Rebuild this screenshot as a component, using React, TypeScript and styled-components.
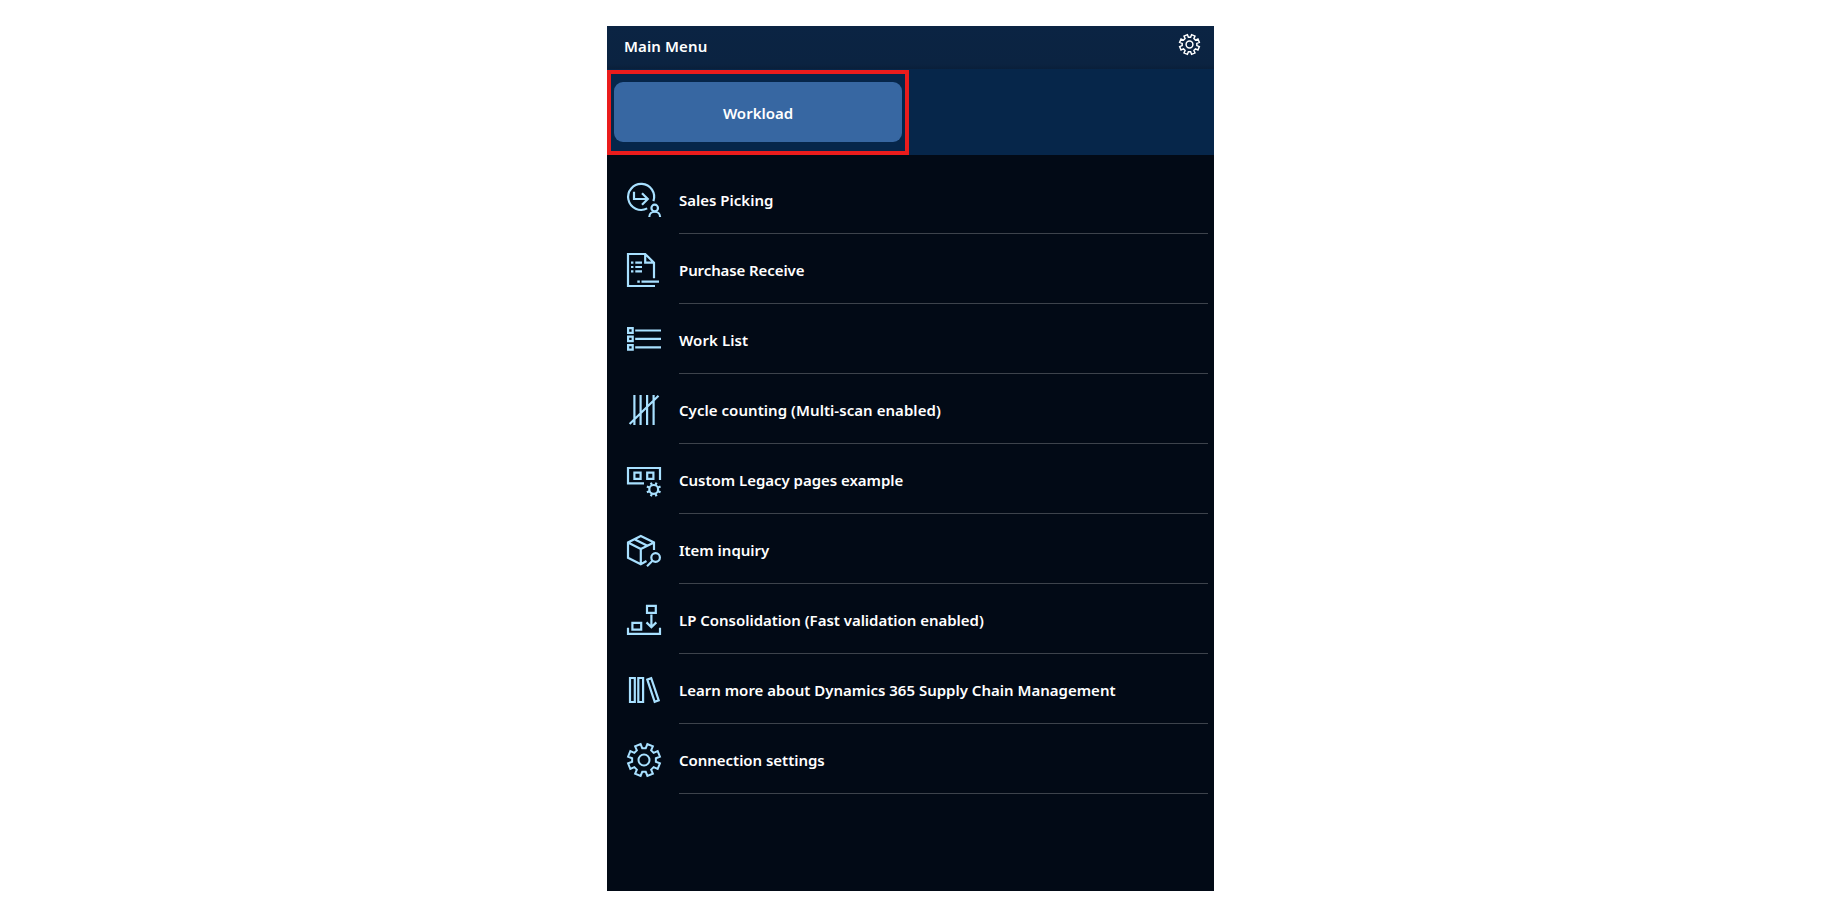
import React from "react";
import styled, { createGlobalStyle } from "styled-components";

const GlobalStyle = createGlobalStyle`
  * { box-sizing: border-box; }
  body { margin: 0; background: #fff; }
`;

const Page = styled.div`
  display: flex;
  justify-content: center;
  padding-top: 26px;
  height: 917px;
`;

const Device = styled.main`
  display: flex;
  flex-direction: column;
  width: 607px;
  height: 865px;
  background: #020a16;
  color: #fff;
  font: 600 15px/22px "Noto Sans", "Open Sans", sans-serif;
`;

const Header = styled.header`
  display: flex;
  justify-content: space-between;
  height: 43px;
  padding: 8px 14px 0 17px;
  background: linear-gradient(#0b2443 0, #0b2341 38px, #0a1f3a 43px);
`;

const Title = styled.h1`
  margin: 1px 0 0;
  font-size: inherit;
  font-weight: inherit;
`;

const Tabs = styled.div`
  height: 86px;
  padding-top: 1px;
  background: #06264a;
`;

const Highlight = styled.div`
  width: 302px;
  height: 85px;
  padding: 8px 3px;
  border: 4px solid #ea1c1c;
`;

const WorkloadButton = styled.button`
  display: block;
  width: 288px;
  height: 60px;
  padding: 1px 0 0;
  border: 0;
  border-radius: 9px;
  background: #3767a2;
  color: inherit;
  font: inherit;
`;

const Menu = styled.ul`
  margin: 0;
  padding: 9px 6px 0 20px;
  list-style: none;
`;

const Item = styled.li`
  display: flex;
  justify-content: space-between;
  height: 70px;
  svg { margin-top: 19px; }
`;

const ItemBody = styled.div`
  width: 529px;
  padding-top: 25px;
  border-bottom: 1px solid #3d434c;
`;

const Label = styled.span<{ $spacing?: number }>`
  letter-spacing: ${(p) => p.$spacing ?? 0}px;
  white-space: nowrap;
`;

const Icon = styled.svg<{ $color?: string; $weight?: number }>`
  flex: none;
  display: block;
  overflow: visible;
  fill: none;
  stroke: ${(p) => p.$color ?? "#a8e0ff"};
  stroke-width: ${(p) => p.$weight ?? 2.2};
`;

const gearPath = (() => {
  const pts: string[] = [];
  const at = (r: number, deg: number) => {
    const a = (deg * Math.PI) / 180;
    pts.push(`${(17 + r * Math.sin(a)).toFixed(2)} ${(17 - r * Math.cos(a)).toFixed(2)}`);
  };
  for (let k = 0; k < 8; k++) {
    const c = k * 45;
    at(12, c - 8.5);
    at(12, c + 8.5);
    at(16.3, c + 12);
    at(16.3, c + 33);
  }
  return `M${pts.join("L")}Z`;
})();

const Gear = ({ size = 34, color, weight = 2 }: { size?: number; color?: string; weight?: number }) => (
  <Icon width={size} height={size} viewBox="0 0 34 34" $color={color} $weight={weight}>
    <path d={gearPath} />
    <circle cx="17" cy="17" r="5.5" />
  </Icon>
);

const icons: Record<string, React.ReactNode> = {
  sales: (
    <>
      <path d="M26.4 18.2A13 13 0 1 0 20.2 25.4" />
      <path d="M7 8.7V16H20.5M15 10.2L20.8 16L15 21.8" />
      <circle cx="27.7" cy="25" r="3.3" />
      <path d="M22.3 34C22.3 27 33.1 27 33.1 34" />
    </>
  ),
  purchase: (
    <>
      <path d="M28 33H1V1H18.2L27 9.6V25.3M18.2 1V9.7H27" />
      <path d="M4 9.7H6.4M8.3 9.7H15M4 14H6.4M8.3 14H15M4 18.3H6.4M8.3 18.3H15M10.3 28.6H12.8M14.5 28.6H32" />
    </>
  ),
  list: (
    <>
      <path d="M1.1 5.2H5.7V9.8H1.1ZM1.1 13.6H5.7V18.2H1.1ZM1.1 22.1H5.7V26.7H1.1Z" />
      <path d="M8.2 7.5H34M8.2 15.9H34M8.2 24.4H34" />
    </>
  ),
  tally: <path d="M7.4 2V32M13.6 2V32M20.1 2V32M26.6 2V32M2.6 31L31.5 2.8" />,
  custom: (
    <>
      <path d="M17 20.3H1V5H33V17" />
      <path d="M7.4 9.7H13.6V15.9H7.4ZM20.2 9.7H26.4V15.9H20.2Z" />
      <circle cx="26.7" cy="26.4" r="4.4" />
      {[22.5, 67.5, 112.5, 157.5, 202.5, 247.5, 292.5, 337.5].map((d) => (
        <path key={d} d="M26.7 21.6V19" transform={`rotate(${d} 26.7 26.4)`} />
      ))}
    </>
  ),
  item: (
    <>
      <path d="M27 17V9.4L13.8 3L1 9.4V24.8L13.8 31.2L19.5 28M1 9.4L13.8 16L27 9.4M13.8 16V31.2M7.4 6.3L20.4 12.7" />
      <circle cx="28.6" cy="24.5" r="4.3" />
      <path d="M25.5 27.7L20 33.2" />
    </>
  ),
  lp: (
    <>
      <path d="M20 3.1H28.8V10.1H20ZM5.4 20H14.2V26.8H5.4ZM1 25V31H33V25" transform="translate(0 -0.2)" />
      <path d="M24.4 11.5V24.3M19.5 19.4L24.4 24.3L29.3 19.4" />
    </>
  ),
  books: <path d="M3 5H7.8V29H3ZM11.3 5H16.1V29H11.3ZM20.3 6.6L24.2 5.2L31.7 27.3L27.7 28.8Z" />,
};

const entries: { icon: string; text: string; spacing?: number }[] = [
  { icon: "sales", text: "Sales Picking" },
  { icon: "purchase", text: "Purchase Receive", spacing: -0.1 },
  { icon: "list", text: "Work List", spacing: 0.08 },
  { icon: "tally", text: "Cycle counting (Multi-scan enabled)", spacing: 0.05 },
  { icon: "custom", text: "Custom Legacy pages example", spacing: -0.03 },
  { icon: "item", text: "Item inquiry", spacing: -0.02 },
  { icon: "lp", text: "LP Consolidation (Fast validation enabled)", spacing: -0.02 },
  { icon: "books", text: "Learn more about Dynamics 365 Supply Chain Management" },
  { icon: "gear", text: "Connection settings", spacing: -0.03 },
];

export default function App() {
  return (
    <>
      <GlobalStyle />
      <Page>
        <Device>
          <Header>
            <Title><Label $spacing={0.12}>Main Menu</Label></Title>
            <Gear size={21} color="#fff" weight={2.4} />
          </Header>
          <Tabs>
            <Highlight>
              <WorkloadButton><Label>Workload</Label></WorkloadButton>
            </Highlight>
          </Tabs>
          <Menu>
            {entries.map(({ icon, text, spacing }) => (
              <Item key={text}>
                {icon === "gear" ? <Gear /> : <Icon width="34" height="34" viewBox="0 0 34 34">{icons[icon]}</Icon>}
                <ItemBody><Label $spacing={spacing}>{text}</Label></ItemBody>
              </Item>
            ))}
          </Menu>
        </Device>
      </Page>
    </>
  );
}
